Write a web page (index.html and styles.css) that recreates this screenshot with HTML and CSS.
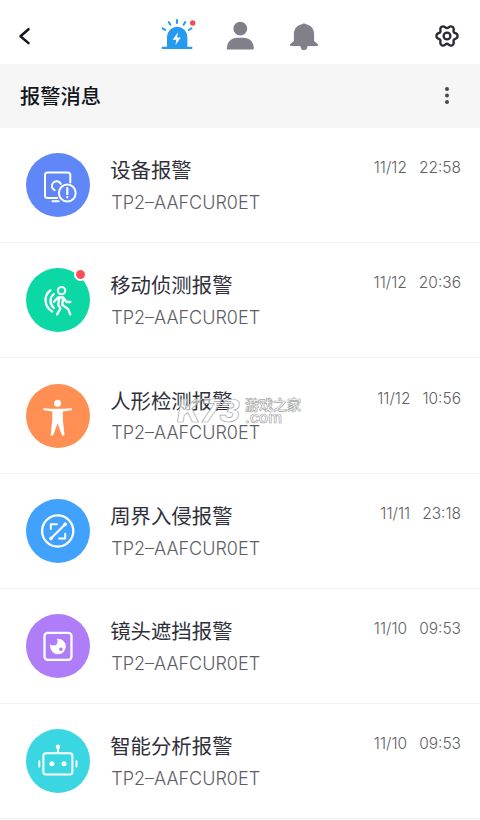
FILE: index.html
```html
<!DOCTYPE html>
<html lang="zh-CN">
<head>
<meta charset="utf-8">
<title>报警消息</title>
<link rel="stylesheet" href="styles.css">
</head>
<body>
<main class="screen">
  <header class="topbar">
    <svg class="back" viewBox="0 0 16 20"><path d="M11.500 3.200 3.500 10.300l8 6.800"/></svg>
    <nav class="tabs">
      <svg class="tab" viewBox="0 0 40 40">
        <g fill="none" stroke="#259bf0" stroke-width="2" stroke-linecap="round"><path d="M5.600 12.400 8.200 14M11.700 6l1.700 2.700M20 4v3M28.300 6l-1.700 2.700M34.400 12.400 31.800 14"/></g>
        <path fill="#259bf0" d="M10 30.800V21a10.200 10.200 0 0 1 20.400 0v9.800h4a1.100 1.100 0 0 1 0 2.200H5.600a1.100 1.100 0 0 1 0-2.200z"/>
        <path fill="#fff" d="M21 16.300 15.700 23.800h3.600l-.8 5.200 5.300-7.400h-3.700z"/>
        <circle cx="35.700" cy="7" r="2.700" fill="#f04b56"/>
      </svg>
      <svg class="tab" viewBox="0 0 40 40"><g fill="#817f89"><circle cx="20.300" cy="12.700" r="6.900"/><path d="M6.800 33.400c0-7.600 4.600-11.600 10.500-11.600h6c5.900 0 10.500 4 10.500 10.600 0 .7-.3 1-.9 1z"/></g></svg>
      <svg class="tab" viewBox="0 0 40 40"><path fill="#817f89" d="M18.700 8q1.300-1.500 2.600 0c5 .9 8.800 4.500 8.800 9.800v7.200l3.500 2.900c.8.700.6 2-.7 2h-9.300c-.3 2.500-1.300 4.200-3.600 4.200s-3.300-1.700-3.600-4.200H7.100c-1.300 0-1.500-1.300-.7-2l3.500-2.900v-7.200c0-5.300 3.800-8.900 8.800-9.800z"/></svg>
    </nav>
    <svg class="gear" viewBox="0 0 24 24"><path d="M12 4.200Q12.900 4.200 13.750 3.400 15.500 1.800 17.300 2.800 19.100 3.850 18.600 6.200 18.060 8.500 20.300 9.200 22.600 9.900 22.600 12 22.600 14.100 20.300 14.800 18.060 15.500 18.600 17.800 19.100 20.150 17.300 21.200 15.500 22.200 13.750 20.600 12 19 10.250 20.600 8.500 22.200 6.700 21.200 4.900 20.150 5.400 17.800 5.940 15.500 3.700 14.800 1.400 14.100 1.400 12 1.400 9.900 3.700 9.200 5.940 8.500 5.400 6.200 4.900 3.850 6.700 2.800 8.500 1.800 10.250 3.400 11.100 4.200 12 4.200z"/><circle cx="12" cy="12" r="3.400"/></svg>
  </header>
  <section class="heading">
    <h1>报警消息</h1>
    <svg class="more" viewBox="0 0 6 20"><circle cx="3" cy="3" r="2"/><circle cx="3" cy="9.500" r="2"/><circle cx="3" cy="16" r="2"/></svg>
  </section>
  <ul class="list">
    <li class="row">
      <span class="avatar blue"><svg viewBox="0 0 64 64"><path d="M44.300 29.500V22a2.500 2.500 0 0 0-2.500-2.500H21.500A2.500 2.500 0 0 0 19 22v20.500a2.500 2.500 0 0 0 2.500 2.500h9.700M26.500 48.300h6.200M28.500 37.200a4.700 4.700 0 1 1 6.300-6.300"/><circle cx="41.300" cy="40" r="8.400"/><path stroke-width="2.200" d="M41.300 35v6.200M41.300 44v.3"/></svg></span>
      <div class="info"><h2>设备报警</h2><p>TP2–AAFCUR0ET</p></div>
      <div class="when"><span>11/12</span><span>22:58</span></div>
    </li>
    <li class="row">
      <span class="avatar green"><svg viewBox="0 0 64 64"><circle cx="35.600" cy="22.600" r="3.700"/><path stroke-width="2.300" d="m27.800 34 4.200-4.500h5.200l3.300 4.500h3.900M33.200 29.800l-1 7c-.1 1.700 3 2.200 1.800 4.600l-2.900 5M37.200 30l-1 6.800 6 4.300 2 5.300M24.500 22.200c-7.200 5.300-6.500 16.500 1.700 21.200M27.800 26c-4.600 4-4.200 10.200 0 14"/></svg><i class="dot"></i></span>
      <div class="info"><h2>移动侦测报警</h2><p>TP2–AAFCUR0ET</p></div>
      <div class="when"><span>11/12</span><span>20:36</span></div>
    </li>
    <li class="row">
      <span class="avatar orange"><svg viewBox="0 0 64 64"><g fill="#fff" stroke="none"><circle cx="31.600" cy="19.200" r="3.500"/><path d="M18.100 24.200c9 .7 18 .7 27 0 1.300-.1 1.300 1.800.1 2l-8.400 1.300.2 9.500 1.500 13.700c.1 1.200-2.300 1.300-2.700.1L31.600 39.300 27.400 50.800c-.4 1.200-2.800 1.100-2.700-.1L26.200 37l.2-9.500-8.400-1.300c-1.200-.2-1.200-2.100.1-2z"/></g></svg></span>
      <div class="info"><h2>人形检测报警</h2><p>TP2–AAFCUR0ET</p></div>
      <div class="when"><span>11/12</span><span>10:56</span></div>
    </li>
    <li class="row">
      <span class="avatar sky"><svg viewBox="0 0 64 64"><circle cx="31.700" cy="32" r="15.600" stroke-width="2.300"/><path d="m25.200 39.200 14-14M24.800 30v-4.800h6M33.200 39.500h6v-4.800"/><path stroke-width="3.400" d="m24.800 39.600.4-.4M38.900 25.500l.4-.4"/></svg></span>
      <div class="info"><h2>周界入侵报警</h2><p>TP2–AAFCUR0ET</p></div>
      <div class="when"><span>11/11</span><span>23:18</span></div>
    </li>
    <li class="row">
      <span class="avatar purple"><svg viewBox="0 0 64 64"><rect x="18.500" y="18.800" width="27" height="27" rx="3.200" stroke-width="2.300"/><circle cx="32" cy="32.500" r="7.800" fill="#fff" stroke="none"/><g fill="#b07df8" stroke="none"><circle cx="27.500" cy="27.500" r="4"/><circle cx="34.900" cy="35.300" r="1.800"/></g></svg></span>
      <div class="info"><h2>镜头遮挡报警</h2><p>TP2–AAFCUR0ET</p></div>
      <div class="when"><span>11/10</span><span>09:53</span></div>
    </li>
    <li class="row">
      <span class="avatar cyan"><svg viewBox="0 0 64 64"><rect x="17.400" y="24.300" width="29" height="21.200" rx="2.500"/><path d="M32 23.500v-4M13.300 32.300v5.200M50.500 32.300v5.200"/><g fill="#fff" stroke="none"><circle cx="32" cy="17.700" r="2.200"/><circle cx="25.900" cy="34.800" r="2.500"/><circle cx="38" cy="34.800" r="2.500"/></g></svg></span>
      <div class="info"><h2>智能分析报警</h2><p>TP2–AAFCUR0ET</p></div>
      <div class="when"><span>11/10</span><span>09:53</span></div>
    </li>
  </ul>
  <svg class="watermark" viewBox="0 0 128 40">
    <text class="wm-logo" x="1" y="28.500" textLength="63" lengthAdjust="spacingAndGlyphs">K73</text>
    <text class="wm-name" x="69" y="17" textLength="56">游戏之家</text>
    <text class="wm-com" x="69" y="29.500" textLength="37" lengthAdjust="spacingAndGlyphs">.com</text>
  </svg>
</main>
</body>
</html>
```
FILE: styles.css
```css
* { box-sizing: border-box; margin: 0; padding: 0; }
body { background: #fff; font-family: Inter, "Noto Sans CJK SC", sans-serif; }
.screen { position: relative; width: 480px; height: 820px; overflow: hidden; background: #fff; }
.topbar { display: flex; align-items: center; justify-content: space-between; height: 64px; padding: 8px 21px 0 17px; }
.back { width: 16px; height: 20px; fill: none; stroke: #17171f; stroke-width: 2.5; stroke-linecap: round; stroke-linejoin: round; }
.tabs { display: flex; gap: 23.5px; padding-left: 12px; }
.tab { width: 40px; height: 40px; }
.gear { width: 24px; height: 24px; fill: none; stroke: #292933; stroke-width: 2.3; }
.heading { display: flex; align-items: center; justify-content: space-between; height: 64px; padding: 0 30px 0 20px; background: #f6f6f6; }
.heading h1 { padding-top: 2px; font-size: 20.3px; line-height: 30px; font-weight: 500; color: #12151b; }
.more { width: 6px; height: 20px; fill: #484850; }
.list { list-style: none; }
.row { display: flex; align-items: flex-start; height: 115.2px; padding: 25.3px 19px 0 25.7px; border-bottom: 1px solid #f3f3f3; }
.avatar { position: relative; flex: none; width: 64px; height: 64px; border-radius: 50%; }
.avatar svg { display: block; width: 64px; height: 64px; fill: none; stroke: #fff; stroke-width: 2; stroke-linecap: round; stroke-linejoin: round; }
.blue { background: #5f87f8; }
.green { background: #0bd8a4; }
.orange { background: #ff8f52; }
.sky { background: #41a2fe; }
.purple { background: #b07df8; }
.cyan { background: #3ad6e2; }
.dot { position: absolute; top: 0; right: 3px; width: 13px; height: 13px; border: 2px solid #fff; border-radius: 50%; background: #fb5058; }
.info { flex: 1; margin-left: 20.5px; }
.info h2 { margin-top: 3px; font-size: 20.4px; line-height: 30px; font-weight: 400; color: #30303b; }
.info p { margin: 4.7px 0 0 1px; font-size: 18px; line-height: 24px; font-weight: 300; color: #5d5d66; }
.when { display: flex; gap: 12px; margin-top: 5px; font-size: 15.5px; line-height: 20px; font-weight: 300; color: #606065; }
.watermark { position: absolute; left: 176px; top: 393px; width: 128px; height: 40px; fill: rgba(255,255,255,.6); stroke: #a9a9a9; stroke-width: .7; }
.wm-logo { font: italic 800 31px Inter, sans-serif; }
.wm-name { font: 700 14px "Noto Sans CJK SC", sans-serif; }
.wm-com { font: 600 15px Inter, sans-serif; }
```
